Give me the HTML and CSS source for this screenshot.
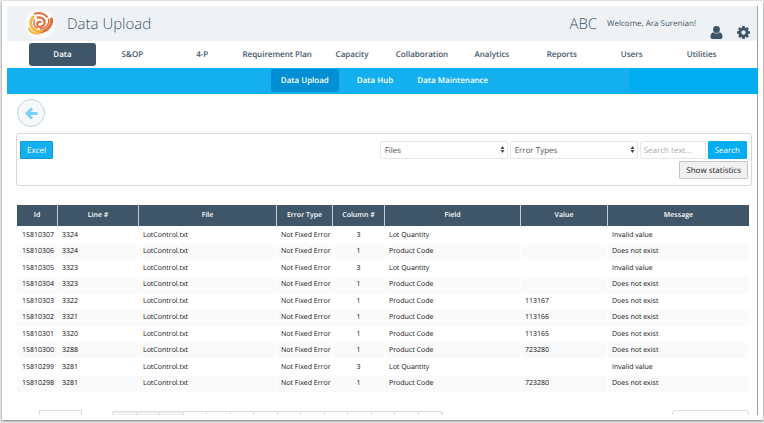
FILE: index.html
```html
<!DOCTYPE html>
<html lang="en">
<head>
<meta charset="utf-8">
<title>Data Upload</title>
<link rel="stylesheet" href="styles.css">
</head>
<body>
<div class="window">
<div class="app">

  <header class="header">
    <svg class="logo" viewBox="0 0 30 30" aria-hidden="true">
      <circle cx="15" cy="15" r="15" fill="#fafafa"/>
      <g fill="none" stroke-linecap="round">
        <path d="M15.500 13c-2.500-.5-4 1.500-3 3.500 1.500 2.500 6 1.500 7-2 1-4-3-7-7-6" stroke="#e2703a" stroke-width="2.200"/>
        <path d="M26.500 10c1 6-4 12-11 13" stroke="#e2703a" stroke-width="3"/>
        <path d="M10 4.800c4-1.500 9.500-.5 12 3" stroke="#e2703a" stroke-width="2"/>
        <path d="M23.500 10c1.500 4-2 9.500-8 10" stroke="#e2703a" stroke-width="1.400"/>
        <path d="M8 8c-4 5-2.500 11 2.500 13.500 2 1 4 1 6 .5" stroke="#f6b53c" stroke-width="2.600"/>
        <path d="M4 19.500c1.500 3.500 5.500 5.500 10 5" stroke="#f6b53c" stroke-width="2"/>
        <path d="M9.500 11c-1.500 3-.5 6.500 2.500 8" stroke="#e2703a" stroke-width="1.400"/>
      </g>
    </svg>
    <h1 class="title">Data Upload</h1>
    <span class="company">ABC</span>
    <span class="welcome">Welcome, Ara Surenian!</span>
    <a class="header-icon" href="#" aria-label="Profile">
      <svg viewBox="0 0 12 13"><circle cx="6" cy="3.500" r="3.400"/><path d="M3 6.300C1 6.600 0 8.500 0 10.800 0 12.200.8 13 2 13h8c1.200 0 2-.8 2-2.200 0-2.300-1-4.200-3-4.500C8.200 7.100 7.200 7.600 6 7.600S3.800 7.100 3 6.300z"/></svg>
    </a>
    <a class="header-icon" href="#" aria-label="Settings">
      <svg viewBox="0 0 1536 1536"><path d="M1024 768q0-106-75-181t-181-75-181 75-75 181 75 181 181 75 181-75 75-181zm512-109v222q0 12-8 23t-20 13l-185 28q-19 54-39 91 35 50 107 138 10 12 10 25t-9 23q-27 37-99 108t-94 71q-12 0-26-9l-138-108q-44 23-91 38-16 136-29 186-7 28-36 28H657q-14 0-24.500-8.500T621 1506l-28-184q-49-16-90-37l-141 107q-10 9-25 9-14 0-25-11-126-114-165-168-7-10-7-23 0-12 8-23 15-21 51-66.500t54-70.500q-27-50-41-99L29 913q-13-2-21-12.500T0 877V655q0-12 8-23t19-13l186-28q14-46 39-92-40-57-107-138-10-12-10-24 0-10 9-23 26-36 98.500-107.500T337 135q13 0 26 10l138 107q44-23 91-38 16-136 29-186 7-28 36-28h222q14 0 24.500 8.500T915 30l28 184q49 16 90 37l142-107q9-9 24-9 13 0 25 10 129 119 165 170 7 8 7 22 0 12-8 23-15 21-51 66.500t-54 70.500q26 50 41 98l183 28q13 2 21 12.500t8 23.500z"/></svg>
    </a>
  </header>

  <nav class="nav">
    <a class="active" href="#">Data</a>
    <a href="#">S&amp;OP</a>
    <a href="#">4-P</a>
    <a class="wide" href="#">Requirement Plan</a>
    <a href="#">Capacity</a>
    <a href="#">Collaboration</a>
    <a href="#">Analytics</a>
    <a href="#">Reports</a>
    <a href="#">Users</a>
    <a href="#">Utilities</a>
  </nav>

  <nav class="subnav">
    <a class="active" href="#">Data Upload</a>
    <a href="#">Data Hub</a>
    <a href="#">Data Maintenance</a>
  </nav>

  <main class="content">
    <a class="back" href="#" aria-label="Back">
      <svg viewBox="0 0 13 13"><path d="M7 1.500 2 6.500l5 5M2.500 6.500H12.500" fill="none" stroke="#76d3fb" stroke-width="3"/></svg>
    </a>

    <form class="toolbar">
      <button class="btn btn-primary" type="button">Excel</button>
      <div class="filters">
        <div class="filter-row">
          <div class="select">
            <select aria-label="Files"><option>Files</option></select>
            <svg viewBox="0 0 4 7"><path d="M0 3 2 0l2 3zM0 4h4L2 7z"/></svg>
          </div>
          <div class="select">
            <select aria-label="Error Types"><option>Error Types</option></select>
            <svg viewBox="0 0 4 7"><path d="M0 3 2 0l2 3zM0 4h4L2 7z"/></svg>
          </div>
          <input class="search" type="text" placeholder="Search text..." aria-label="Search text">
          <button class="btn btn-search" type="button">Search</button>
        </div>
        <button class="btn btn-default" type="button">Show statistics</button>
      </div>
    </form>

    <table class="grid">
      <colgroup>
        <col class="c-id"><col class="c-line"><col class="c-file"><col class="c-type">
        <col class="c-column"><col class="c-field"><col class="c-value"><col>
      </colgroup>
      <thead>
        <tr><th>Id</th><th>Line #</th><th>File</th><th>Error Type</th><th>Column #</th><th>Field</th><th>Value</th><th>Message</th></tr>
      </thead>
      <tbody>
        <tr><td>15810307</td><td>3324</td><td>LotControl.txt</td><td>Not Fixed Error</td><td class="num">3</td><td>Lot Quantity</td><td></td><td>Invalid value</td></tr>
        <tr><td>15810306</td><td>3324</td><td>LotControl.txt</td><td>Not Fixed Error</td><td class="num">1</td><td>Product Code</td><td></td><td>Does not exist</td></tr>
        <tr><td>15810305</td><td>3323</td><td>LotControl.txt</td><td>Not Fixed Error</td><td class="num">3</td><td>Lot Quantity</td><td></td><td>Invalid value</td></tr>
        <tr><td>15810304</td><td>3323</td><td>LotControl.txt</td><td>Not Fixed Error</td><td class="num">1</td><td>Product Code</td><td></td><td>Does not exist</td></tr>
        <tr><td>15810303</td><td>3322</td><td>LotControl.txt</td><td>Not Fixed Error</td><td class="num">1</td><td>Product Code</td><td>113167</td><td>Does not exist</td></tr>
        <tr><td>15810302</td><td>3321</td><td>LotControl.txt</td><td>Not Fixed Error</td><td class="num">1</td><td>Product Code</td><td>113166</td><td>Does not exist</td></tr>
        <tr><td>15810301</td><td>3320</td><td>LotControl.txt</td><td>Not Fixed Error</td><td class="num">1</td><td>Product Code</td><td>113165</td><td>Does not exist</td></tr>
        <tr><td>15810300</td><td>3288</td><td>LotControl.txt</td><td>Not Fixed Error</td><td class="num">1</td><td>Product Code</td><td>723280</td><td>Does not exist</td></tr>
        <tr><td>15810299</td><td>3281</td><td>LotControl.txt</td><td>Not Fixed Error</td><td class="num">3</td><td>Lot Quantity</td><td></td><td>Invalid value</td></tr>
        <tr><td>15810298</td><td>3281</td><td>LotControl.txt</td><td>Not Fixed Error</td><td class="num">1</td><td>Product Code</td><td>723280</td><td>Does not exist</td></tr>
      </tbody>
    </table>

    <div class="pager">
      <span class="page-size"></span>
      <span class="pages">
        <i class="off"></i><i class="off"></i><i class="off"></i><i></i><i></i><i></i><i></i><i></i><i></i><i></i><i></i><i></i><i></i><i></i>
      </span>
      <span class="page-info"></span>
    </div>
  </main>

</div>
</div>
</body>
</html>
```
FILE: styles.css
```css
* {
    box-sizing: border-box;
}
body {
    margin: 0;
    background-color: #e8e8e8;
    font-family: "Open Sans", "Noto Sans", sans-serif;
    font-size: 8px;
    color: #3f5568;
    text-rendering: geometricPrecision;
}
a {
    color: inherit;
    text-decoration: none;
}
button, input, select {
    text-rendering: inherit;
}

/* window frame */
.window {
    height: 100vh;
    padding: 1px 1px 3px 2px;
    overflow: hidden;
}
.app {
    height: 100%;
    padding: 5px 5px 0;
    background-color: #fff;
    border-bottom: 5px solid #fff;
    box-shadow: 0 1px 2px #777;
    overflow: hidden;
}

/* header */
.header {
    display: flex;
    align-items: center;
    height: 35px;
    padding: 0 7px 0 18px;
    background-color: #eef2f4;
    border-right: 1px solid #9aa5ae;
}
.logo {
    width: 30px;
    height: 30px;
}
.title {
    flex: 1;
    margin: 0 0 0 12px;
    font-size: 15px;
    font-weight: 300;
}
.company {
    font-size: 15px;
    font-weight: 300;
}
.welcome {
    margin: 0 14px 0 10px;
}
.header-icon {
    align-self: flex-end;
    height: 15px;
}
.header-icon + .header-icon {
    margin-left: 14px;
}
.header-icon svg {
    display: block;
    width: 13px;
    height: 13px;
    fill: #3f5568;
}

/* menus */
.nav {
    display: flex;
    gap: 3px;
    padding: 2px 22px;
    font-weight: 600;
    border-right: 1px solid #99a;
}
.nav a {
    flex: 67;
    height: 23px;
    line-height: 23px;
    text-align: center;
    white-space: nowrap;
    border-radius: 3px;
}
.nav .wide {
    flex: 77;
}
.nav .active {
    background-color: #3f5568;
    color: #fff;
}
.subnav {
    display: flex;
    justify-content: center;
    height: 26px;
    padding: 1px 0 2px 6px;
    background: linear-gradient(to right, #14afee 83%, #00adf1 83%);
    color: #fff;
    font-weight: 600;
}
.subnav a {
    padding: 0 12px;
    line-height: 23px;
    border-radius: 3px;
}
.subnav .active {
    margin-right: 6px;
    padding: 0 10px;
    background-color: #008fd5;
}

/* content */
.content {
    height: 100%;
    padding: 5px 5px 0 9px;
    border-right: 1px solid #a09a9a;
}
.back {
    display: flex;
    align-items: center;
    justify-content: center;
    width: 28px;
    height: 28px;
    margin-left: 1px;
    background-color: #f7f8f9;
    border: 1px solid #b9d5e8;
    border-radius: 50%;
}
.back svg {
    width: 13px;
    height: 13px;
}
.toolbar {
    display: flex;
    justify-content: space-between;
    align-items: flex-start;
    height: 53px;
    margin: 6px 0 19px;
    padding: 7px 3px;
    border: 1px solid #d8d8d8;
    border-radius: 3px;
}
.btn {
    height: 18px;
    padding: 0 6px;
    border: 1px solid #0d9ad6;
    border-radius: 1px;
    background-color: #14afee;
    color: #fff;
    font: 8px "Open Sans", sans-serif;
}
.btn-search {
    background-color: #00adf1;
    border-color: #00adf1;
}
.btn-default {
    background-color: #f0f0f0;
    border-color: #c4c4c4;
    color: #222;
}
.filters {
    display: flex;
    flex-direction: column;
    align-items: flex-end;
    gap: 2px;
}
.filter-row {
    display: flex;
    gap: 2px;
    padding-right: 1px;
}
.select {
    position: relative;
}
.select select,
.search {
    width: 128px;
    height: 18px;
    padding: 0 4px;
    border: 1px solid #e6e6e6;
    border-radius: 2px;
    background-color: #fff;
    color: #555;
    font: 8px "Open Sans", sans-serif;
    appearance: none;
}
.select svg {
    position: absolute;
    top: 5px;
    right: 3px;
    width: 5px;
    height: 7px;
    fill: #444;
    pointer-events: none;
}
.search {
    width: 66px;
    padding: 0 3px;
}
.search::placeholder {
    color: #aaa;
}

/* results */
.grid {
    width: calc(100% - 4px);
    margin-left: 1px;
    table-layout: fixed;
    border-collapse: separate;
    border-spacing: 0;
    font-size: 7px;
    color: #111;
}
.c-id { width: 41px; }
.c-line { width: 81px; }
.c-file { width: 138px; }
.c-type { width: 56px; }
.c-column { width: 52px; }
.c-field { width: 136px; }
.c-value { width: 87px; }
.grid th,
.grid td {
    height: 16px;
    padding: 0 0 0 4px;
    line-height: 16px;
    text-align: left;
    white-space: nowrap;
    border-right: 1px solid #fff;
}
.grid td:first-child {
    padding-left: 5px;
}
.grid thead th {
    height: 22px;
    padding: 1px 0 0;
    background-color: #3f5568;
    color: #fff;
    font-weight: 600;
    text-align: center;
    border-color: #c5ccd2;
    border-bottom: 1px solid #fff;
}
.grid th:last-child {
    border-right: 0;
}
.grid .num {
    padding-left: 0;
    text-align: center;
}
.grid tbody tr:nth-child(odd) td {
    height: 17px;
}
.grid tbody tr:nth-child(even) td {
    background-color: #fafafa;
}

/* pager */
.pager {
    display: flex;
    margin-top: 18px;
    padding: 0 3px 0 23px;
}
.page-size,
.page-info {
    width: 43px;
    height: 18px;
    border: 1px solid #ddd;
}
.page-info {
    width: 77px;
    margin-left: auto;
    border-radius: 3px;
}
.pages {
    display: flex;
    height: 18px;
    margin: 1px 0 0 30px;
    border: 1px solid #ddd;
    border-radius: 2px;
}
.pages i {
    width: 23px;
    border-right: 1px solid #ddd;
}
.pages i:nth-child(odd) {
    width: 24px;
}
.pages .off {
    background-color: #f2f2f2;
}
```
